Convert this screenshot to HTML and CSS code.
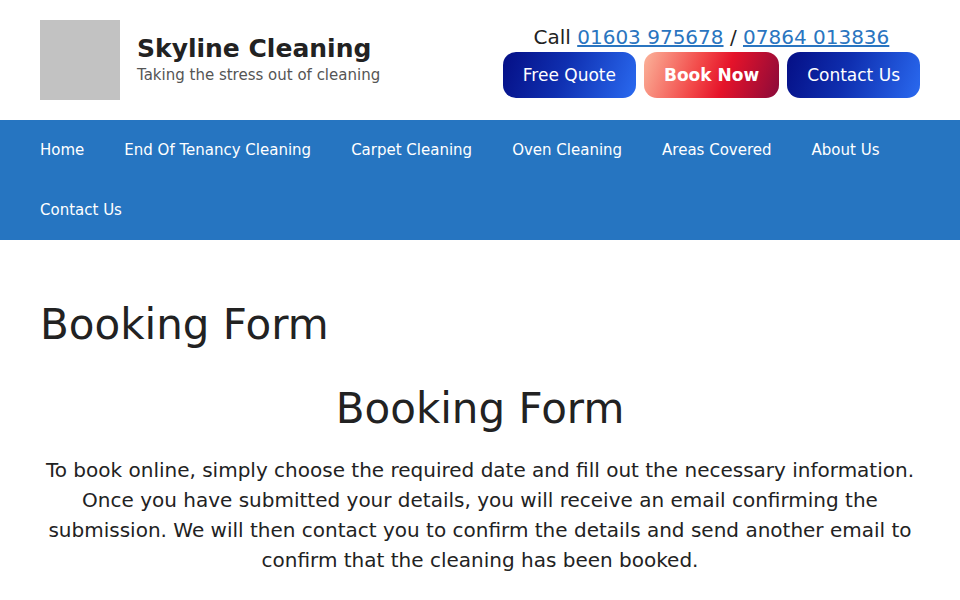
FILE: index.html
```html
<!DOCTYPE html>
<html lang="en">
<head>
<meta charset="utf-8">
<title>Booking Form - Skyline Cleaning</title>
<link rel="stylesheet" href="styles.css">
</head>
<body>
<header class="site-header">
  <div class="brand">
    <div class="logo"></div>
    <div class="brand-text">
      <div class="site-title">Skyline Cleaning</div>
      <div class="tagline">Taking the stress out of cleaning</div>
    </div>
  </div>
  <div class="header-cta">
    <div class="phone">Call <a href="#">01603 975678</a> / <a href="#">07864 013836</a></div>
    <div class="buttons">
      <a class="btn btn-blue" href="#">Free Quote</a>
      <a class="btn btn-red" href="#">Book Now</a>
      <a class="btn btn-blue" href="#">Contact Us</a>
    </div>
  </div>
</header>
<nav class="main-nav">
  <a href="#">Home</a>
  <a href="#">End Of Tenancy Cleaning</a>
  <a href="#">Carpet Cleaning</a>
  <a href="#">Oven Cleaning</a>
  <a href="#">Areas Covered</a>
  <a href="#">About Us</a>
  <a href="#">Contact Us</a>
</nav>
<main class="content">
  <h1 class="page-title">Booking Form</h1>
  <h2 class="section-title">Booking Form</h2>
  <p class="intro">To book online, simply choose the required date and fill out the necessary information. Once you have submitted your details, you will receive an email confirming the submission. We will then contact you to confirm the details and send another email to confirm that the cleaning has been booked.</p>
</main>
</body>
</html>
```

FILE: styles.css
```css
* { box-sizing: border-box; }
html, body { margin: 0; padding: 0; }
body {
  font-family: "DejaVu Sans", sans-serif;
  color: #222222;
  background: #ffffff;
}
a { color: inherit; text-decoration: none; }

.site-header {
  height: 120px;
  padding: 20px 40px;
  display: flex;
  justify-content: space-between;
  align-items: center;
}
.brand {
  display: flex;
  align-items: center;
  gap: 17px;
}
.logo {
  width: 80px;
  height: 80px;
  background: #c2c2c2;
}
.brand-text {
  margin-top: -3px;
}
.site-title {
  font-size: 25px;
  font-weight: bold;
  line-height: 30px;
  color: #222222;
}
.tagline {
  font-size: 15px;
  line-height: 18px;
  color: #555555;
  margin-top: 2px;
}
.header-cta {
  display: flex;
  flex-direction: column;
  align-items: center;
  gap: 2px;
  margin-top: 2px;
}
.phone {
  font-size: 20px;
  line-height: 25px;
  color: #222222;
}
.phone a {
  color: #2a75c0;
  text-decoration: underline;
}
.buttons {
  display: flex;
  gap: 8px;
}
.btn {
  display: block;
  height: 46px;
  line-height: 46px;
  padding: 0 20px;
  border-radius: 13px;
  color: #ffffff;
  font-size: 17px;
}
.btn-blue {
  background: linear-gradient(110deg, #050f85 0%, #0f2fb0 45%, #2a6af0 100%);
}
.btn-red {
  font-weight: bold;
  background: linear-gradient(110deg, #fbb39a 0%, #f24848 40%, #e5132a 60%, #8a0a3a 100%);
}

.main-nav {
  background: #2675c1;
  padding: 0 20px;
  display: flex;
  flex-wrap: wrap;
}
.main-nav a {
  display: block;
  padding: 0 20px;
  line-height: 60px;
  font-size: 15px;
  color: #ffffff;
}

.content {
  padding: 60px 40px 0;
}
.page-title {
  margin: 0;
  font-size: 42px;
  font-weight: normal;
  line-height: 49px;
}
.section-title {
  margin: 35px 0 0;
  font-size: 42px;
  font-weight: normal;
  line-height: 49px;
  text-align: center;
}
.intro {
  margin: 22px 0 0;
  font-size: 20px;
  line-height: 30px;
  text-align: center;
}
```
